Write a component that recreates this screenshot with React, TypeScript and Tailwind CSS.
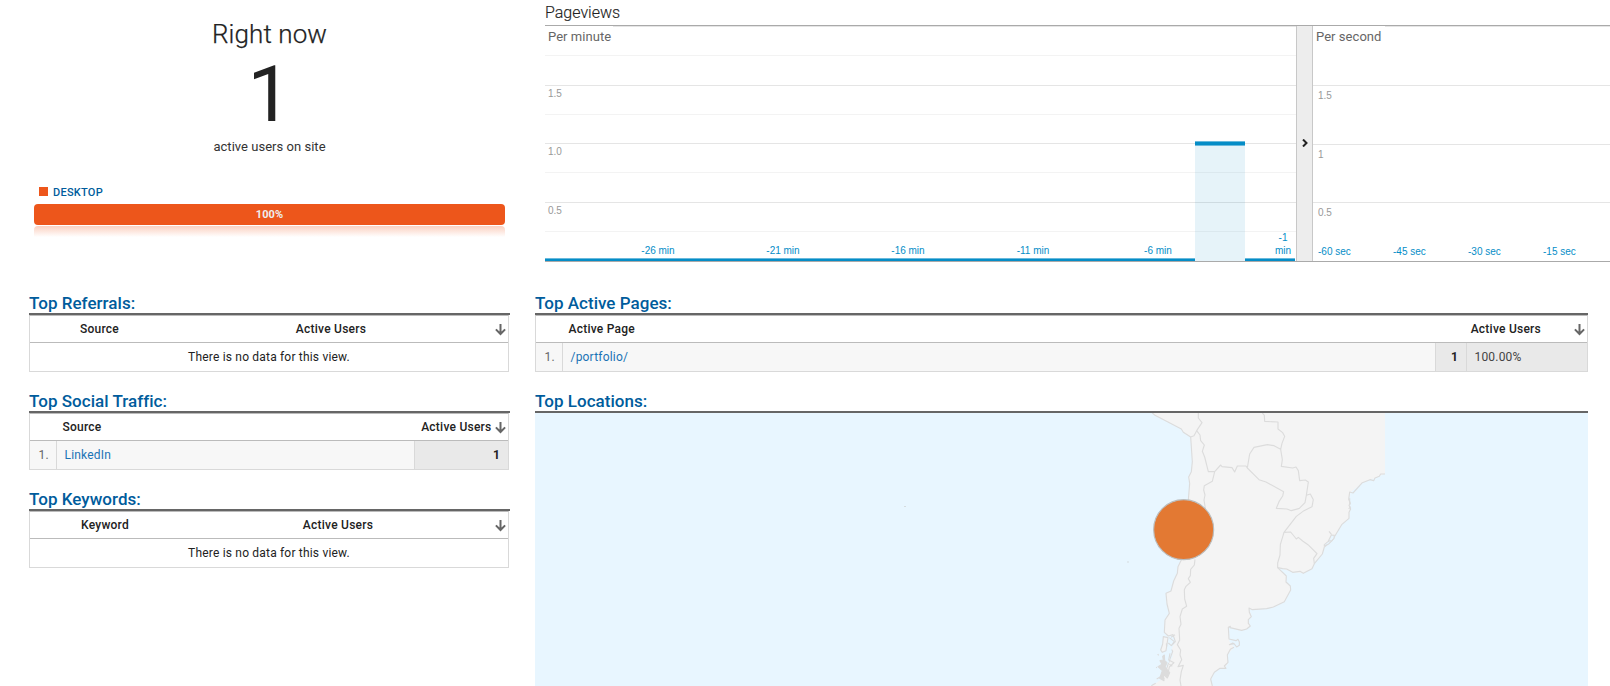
import React from "react";

const SORT_PATH = "M5.5 0V10M0.9 5.4L5.5 10L10.1 5.4";

function SortArrow() {
  return (
    <svg className="h-[12px] w-[11px] shrink-0" viewBox="0 0 11 12" fill="none" stroke="#666" strokeWidth="2">
      <path d={SORT_PATH} />
    </svg>
  );
}

function Title({ children }: { children: React.ReactNode }) {
  return (
    <h2 className="h-[23px] border-b-2 border-[#666] text-[17px] leading-[22px] font-medium tracking-[0.03px] text-[#005c9c] [font-variant-ligatures:common-ligatures]">
      {children}
    </h2>
  );
}

function Frame({ children }: { children: React.ReactNode }) {
  return (
    <div className="mr-px h-[57px] border border-[#d9d9d9] border-t-[#bbb] text-[12px] tracking-[0.19px] text-[#222]">{children}</div>
  );
}

function EmptyTable({ title, first, w1, w2 }: { title: string; first: string; w1: string; w2: string }) {
  return (
    <section className="mb-[18px]">
      <Title>{title}</Title>
      <Frame>
        <div className="flex h-[27px] items-center border-b border-[#bbb] pr-[2.5px] font-medium tracking-[0.24px]">
          <div className={w1}>{first}</div>
          <div className={w2}>Active Users</div>
          <div className="ml-auto flex pt-px"><SortArrow /></div>
        </div>
        <div className="text-center leading-[28px]">There is no data for this view.</div>
      </Frame>
    </section>
  );
}

const minuteLabels = ["-26 min", "-21 min", "-16 min", "-11 min", "-6 min"];
const secondLabels = ["-60 sec", "-45 sec", "-30 sec", "-15 sec"];

function MinuteChart() {
  return (
    <div className="relative h-[235px] w-[751px] shrink-0">
      <svg className="absolute inset-0" width="751" height="235" shapeRendering="crispEdges">
        <path d="M68 0.5H751" stroke="#e5e5e5" />
        <path d="M0 29.5H751M0 88.5H751M0 146.5H751M0 205.5H751" stroke="#f3f3f3" />
        <path d="M0 59.5H751M0 117.5H751M0 176.5H751" stroke="#e5e5e5" />
        <rect x="650" y="118" width="50" height="117" fill="#058dc7" fillOpacity=".1" />
        <rect x="650" y="115" width="50" height="5" fill="#69b9dc" />
        <rect x="650" y="116" width="50" height="3" fill="#058dc7" />
        <path d="M0 232.5H650M700 232.5H750" stroke="#69b9dc" />
        <path d="M0 234H650M700 234H750" stroke="#058dc7" strokeWidth="2" />
      </svg>
      <div className="absolute top-0 left-[3px] text-[13px] leading-[22px] tracking-[0.05px] text-[#666]">Per minute</div>
      <div className="absolute top-[61px] left-[3px] font-[Liberation_Sans,Arial,sans-serif] text-[10px] leading-[14px] text-[#999]">1.5</div>
      <div className="absolute top-[119px] left-[3px] font-[Liberation_Sans,Arial,sans-serif] text-[10px] leading-[14px] text-[#999]">1.0</div>
      <div className="absolute top-[178px] left-[3px] font-[Liberation_Sans,Arial,sans-serif] text-[10px] leading-[14px] text-[#999]">0.5</div>
      <div className="absolute top-[218px] left-[53px] flex font-[Liberation_Sans,Arial,sans-serif] text-[10px] leading-[14px] text-[#058dc7]">
        {minuteLabels.map((t) => (
          <span key={t} className="w-[125px] shrink-0 text-center pl-px pr-[6px]">{t}</span>
        ))}
      </div>
      <div className="absolute top-[205px] left-[728px] w-5 text-center font-[Liberation_Sans,Arial,sans-serif] text-[10px] leading-[13px] text-[#058dc7]">
        -1<br />min
      </div>
    </div>
  );
}

function SecondChart() {
  return (
    <div className="relative h-[235px] w-[297px] shrink-0">
      <svg className="absolute inset-0" width="297" height="235" shapeRendering="crispEdges">
        <path d="M72 0.5H297M0 59.5H297M0 118.5H297M0 176.5H297" stroke="#e5e5e5" />
      </svg>
      <div className="absolute top-0 left-[3px] text-[13px] leading-[22px] tracking-[0.05px] text-[#666]">Per second</div>
      <div className="absolute top-[63px] left-[5px] font-[Liberation_Sans,Arial,sans-serif] text-[10px] leading-[14px] text-[#999]">1.5</div>
      <div className="absolute top-[122px] left-[5px] font-[Liberation_Sans,Arial,sans-serif] text-[10px] leading-[14px] text-[#999]">1</div>
      <div className="absolute top-[180px] left-[5px] font-[Liberation_Sans,Arial,sans-serif] text-[10px] leading-[14px] text-[#999]">0.5</div>
      <div className="absolute top-[219px] left-[5px] flex font-[Liberation_Sans,Arial,sans-serif] text-[10px] leading-[14px] text-[#058dc7]">
        {secondLabels.map((t) => (
          <span key={t} className="w-[75px] shrink-0">{t}</span>
        ))}
      </div>
    </div>
  );
}

function LocationMap() {
  return (
    <svg className="block h-[273px] w-[1053px] bg-[#e8f6ff]" viewBox="535 413 1053 273">
      <g transform="translate(1130 400) scale(.33333)" fill="#f4f4f4" stroke="#dcdcdc" strokeWidth="3.4" strokeLinejoin="round">
        <path
          stroke="none"
          d="M66 38L75 46L154 87L160 97L182 111L187 185L184 215L176 231L179 250L175 300L150 380L155 478L144 500L142 520L131 543L123 573L108 580L111 612L118 640L105 660L103 697L113 710L130 705L137 725L125 745L128 770L115 790L92 840L64 858H248L242 842L252 817L268 806L286 803L294 789L292 765L312 742L298 724L297 682L330 692L350 686L361 678L355 660L364 645L357 628L372 629L430 621L463 605L482 570L481 558L468 548L469 527L443 503L458 506L488 517L520 520L546 506L556 484L577 462L583 441L607 421L635 374L657 355L661 320L657 295L662 277L697 248L735 234L765 221V39Z"
        />
        <g fill="none">
          <path d="M66 38L75 46L154 87L160 97L182 111L192 107L200 92L216 68L205 54V39M182 111L187 185L184 215L176 231L179 250L175 300M155 478L144 500L142 520L131 543L123 573L108 580L111 612L118 640L105 660L103 697L115 708L129 704L136 725L120 741L128 754L116 788L108 812" />
          <path d="M200 92L210 105L212 122L223 135L217 154L224 171L235 215L254 215L272 195L276 200L306 203L314 216L322 198H348L352 204L359 162L372 142L412 134L432 137L452 148L456 130L464 109L458 98L444 87V66L404 64L403 46L397 39" />
          <path d="M254 215L247 244L223 257L221 270L225 285L222 300L226 325M352 204L387 239L408 246L461 275L458 288L447 305L439 325L471 327L484 332L508 325L525 308L529 286L535 246L526 240L509 242L505 212L498 201L488 204L454 199L457 179L452 148" />
          <path d="M529 286L541 282L550 299L546 320L522 332L499 349L462 397L482 396L499 417L505 412L518 423L534 434L561 461L551 475L553 491" />
          <path d="M462 397L451 434L450 465L443 489L443 503L458 506L470 507L488 517L510 514L520 520L546 506L553 491L577 462L583 441L607 421L635 374L657 355V337L662 327L657 316L661 310L656 298L659 276L669 279L697 248L720 239L731 242L735 234L748 229L752 222H765" />
          <path fill="#e8f6ff" d="M583 434L594 425L604 405L613 406L612 415L597 431L583 438Z" />
          <path d="M597 394L605 404M594 425L602 421M659 295V316M662 320L656 327" />
          <path d="M443 503L469 528L468 546L481 558L482 570L463 605L430 621L410 626L367 629L357 624L358 637L364 650L355 659V670L361 678L350 687L335 691L300 683L301 679L295 682L297 717L318 722L324 718L328 726V736L320 741L312 731L298 734L310 728M312 742L301 748L292 765L294 787L283 798L288 805L270 805L253 817L242 837L247 858" />
          <path d="M195 478L193 495L182 508L181 527L175 536L181 547L168 559L163 569L164 597L170 619L157 627L150 650L153 673L147 685L149 720L142 734L152 750L150 765L155 779L144 800L160 796L154 815L150 840L153 858" />
          <path fill="#e8f6ff" stroke="none" d="M116 712L128 708L130 722L126 746L120 762L116 790L104 786L102 766L112 750Z" />
          <path fill="#f4f4f4" d="M100 710L114 713L108 752L97 757L92 750L98 732Z" />
          <path d="M118 713L133 725L124 737L115 729M135 704L123 712M110 740L109 730M83 762L86 766M78 802L81 803" />
          <path fill="#dcdcdc" d="M98 769L103 765L104 782L111 788L105 801L119 818L112 834L100 822L102 842L89 835L97 812L84 800L96 793L90 782L100 780Z" />
          <path d="M120 760L116 780L132 788L118 801L114 820M80 837L94 829L103 837M64 857L77 850M118 793L127 799" />
        </g>
        <circle cx="161" cy="389" r="90" fill="#e37933" stroke="#bbbdbd" />
      </g>
      <path d="M904 506.5h2M1127 562h2" stroke="#d5dcdf" strokeWidth="1" />
    </svg>
  );
}

export default function App() {
  return (
    <div className="h-[686px] w-[1610px] overflow-hidden bg-white font-[Roboto,sans-serif] text-[#222]">
      <div className="flex h-[292px]">
        <div className="w-[545px] shrink-0 pr-[6px]">
          <div className="pt-[18px] text-center text-[26px] leading-[32px] font-light tracking-[0.1px] [-webkit-text-stroke:0.25px_#222]">Right now</div>
          <div className="h-[87px] pt-px text-center text-[78px] leading-[87px]">1</div>
          <div className="text-center text-[13px] leading-[20px] tracking-[0.03px] text-[#333]">active users on site</div>
          <div className="mt-[26px] flex h-[17px] items-start gap-[5px] pl-[39px] text-[11px] leading-[20px] font-medium tracking-[0.25px] text-[#005c9c]">
            <span className="mt-[4px] size-[9px] bg-[#ed561b]" />
            DESKTOP
          </div>
          <div className="mt-1 ml-[34px] w-[471px]">
            <div className="h-[21px] rounded-[4px] bg-[#ed561b] text-center text-[11px] leading-[21px] font-bold tracking-[0.1px] text-[#eee]">100%</div>
            <div className="mt-px h-[11px] rounded-t-[4px] bg-linear-to-b from-[#fad0c0] to-white" />
          </div>
        </div>
        <div className="w-[1065px] shrink-0">
          <div className="h-[26px] border-b border-[#aaa] text-[16px] leading-[25px] font-light [-webkit-text-stroke:0.15px_#222]">Pageviews</div>
          <div className="flex h-[236px] border-b border-[#aaa]">
            <MinuteChart />
            <div className="flex w-[17px] shrink-0 items-center justify-center border-x border-[#c8c8c8] bg-[#ededed] pb-[2px]">
              <svg width="6" height="8" viewBox="0 0 6 8" fill="none" stroke="#222" strokeWidth="2">
                <path d="M1 0.5L4.5 4L1 7.5" />
              </svg>
            </div>
            <SecondChart />
          </div>
        </div>
      </div>
      <div className="flex gap-[25px] pl-[29px]">
        <div className="w-[481px] shrink-0">
          <EmptyTable title="Top Referrals:" first="Source" w1="w-[139px] text-center" w2="w-[290px] text-center pl-[34px]" />
          <section className="mb-[18px]">
            <Title>Top Social Traffic:</Title>
            <Frame>
              <div className="flex h-[27px] items-center border-b border-[#bbb] pr-[2.5px] pl-[32.5px] font-medium tracking-[0.24px]">
                Source
                <span className="ml-auto flex items-center gap-[3px]">Active Users <span className="pt-px"><SortArrow /></span></span>
              </div>
              <div className="flex h-7 leading-[28px]">
                <div className="w-[27px] border-r border-[#d9d9d9] bg-[#f7f7f7] pl-[8.5px] text-[#666]">1.</div>
                <div className="flex-1 bg-[#f7f7f7] pl-[7.5px] text-[#1a73b5]">LinkedIn</div>
                <div className="w-[94px] border-l border-[#d9d9d9] bg-[#e9e9e9] pr-2 text-right font-bold">1</div>
              </div>
            </Frame>
          </section>
          <EmptyTable title="Top Keywords:" first="Keyword" w1="w-[150px] text-center" w2="w-[290px] text-center pl-[26px]" />
        </div>
        <div className="w-[1053px] shrink-0">
          <section className="mb-[18px]">
            <Title>Top Active Pages:</Title>
            <div className="-mr-px">
              <Frame>
                <div className="flex h-[27px] items-center border-b border-[#bbb] pr-[2.5px] pl-[32.5px] font-medium tracking-[0.24px]">
                  Active Page
                  <span className="ml-auto pr-[32.5px]">Active Users</span>
                  <span className="pt-px"><SortArrow /></span>
                </div>
                <div className="flex h-7 leading-[28px]">
                  <div className="w-[27px] border-r border-[#d9d9d9] bg-[#f7f7f7] pl-[8.5px] text-[#666]">1.</div>
                  <div className="flex-1 bg-[#f7f7f7] pl-[7.5px] text-[#1a73b5]">/portfolio/</div>
                  <div className="w-[31px] border-l border-[#d9d9d9] bg-[#e9e9e9] pr-2 text-right font-bold">1</div>
                  <div className="w-[121px] border-l border-[#d9d9d9] bg-[#e9e9e9] pl-[7.5px] text-[#444]">100.00%</div>
                </div>
              </Frame>
            </div>
          </section>
          <section>
            <Title>Top Locations:</Title>
            <LocationMap />
          </section>
        </div>
      </div>
    </div>
  );
}
